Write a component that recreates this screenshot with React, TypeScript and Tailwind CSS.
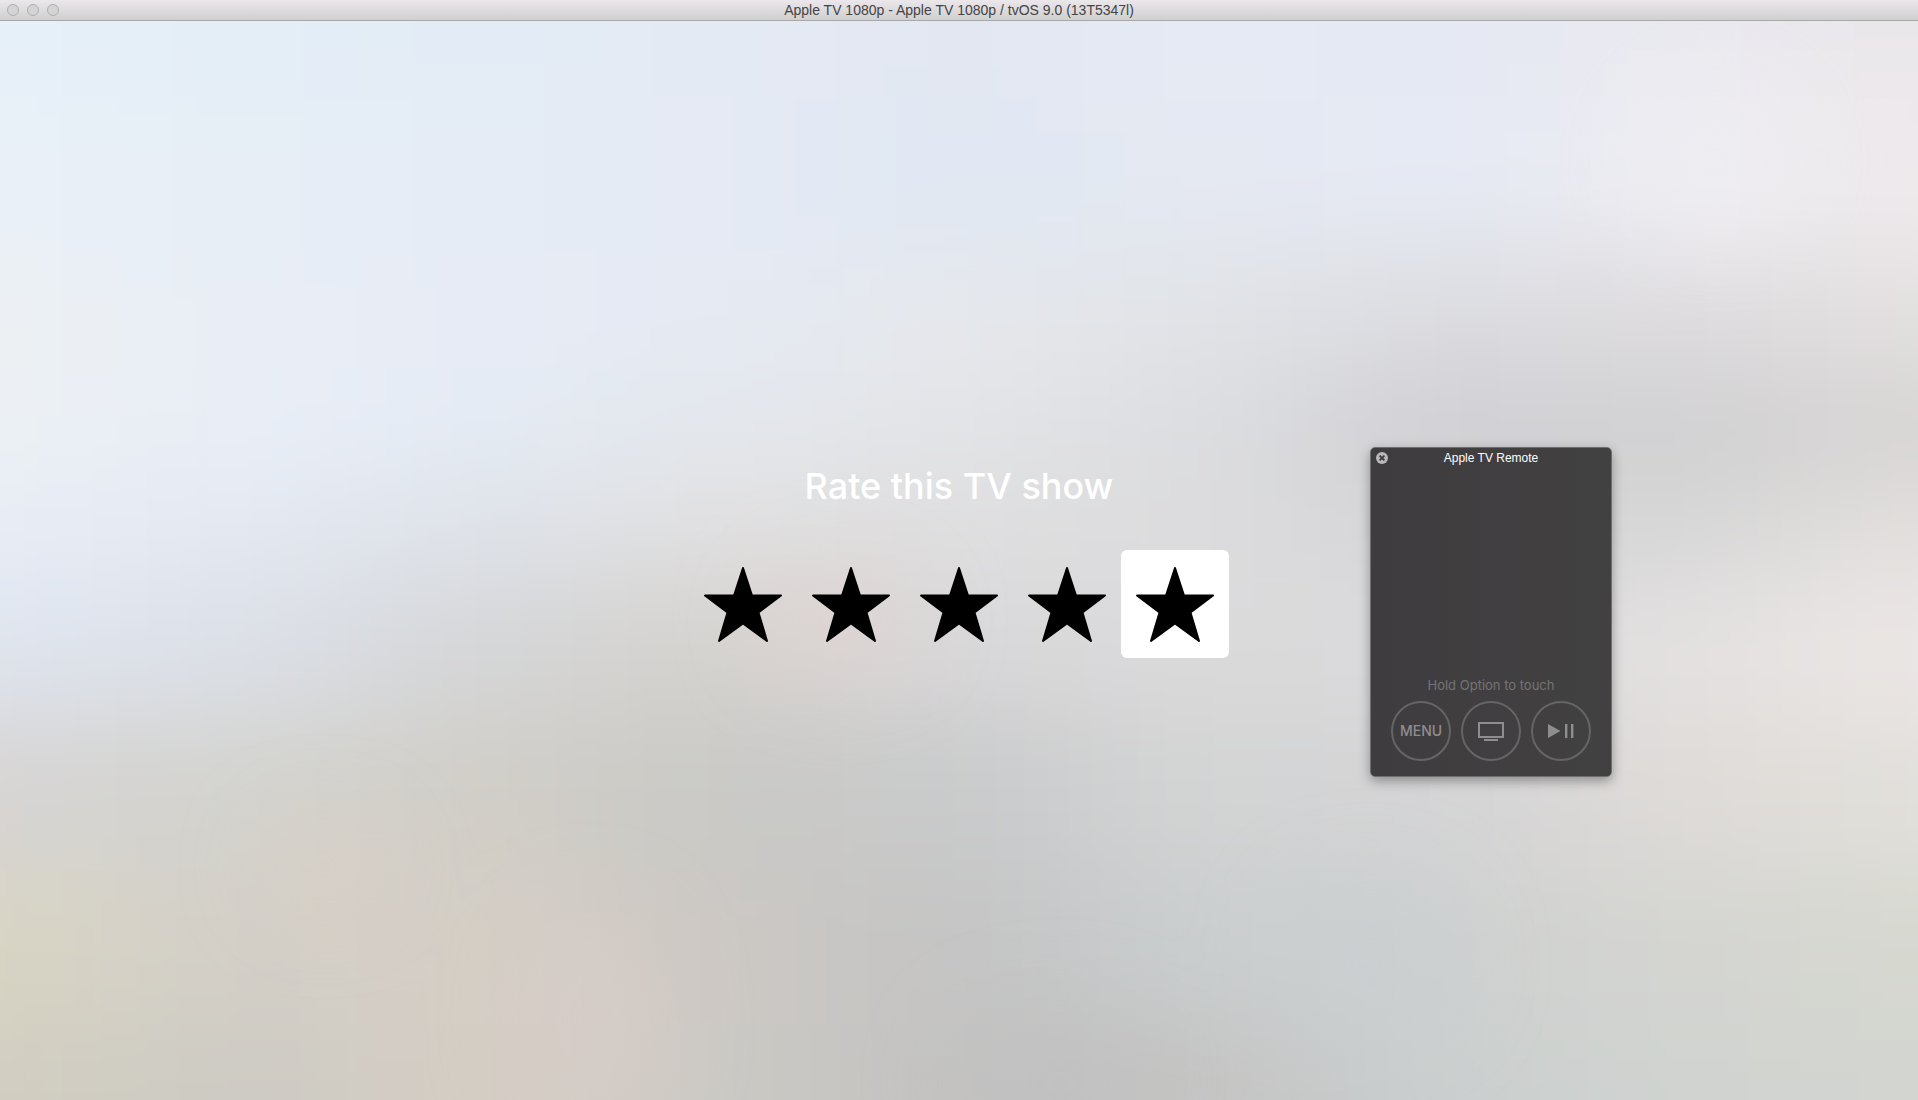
import { useState } from "react";

const columns = [0, 240, 480, 720, 960, 1200, 1440, 1680, 1918];

const wallpaper = [
  { y: 0, colors: ["#e6f0f8", "#e3eef7", "#e3ecf6", "#e4eaf4", "#e3e7f1", "#e6eaf4", "#e5e9f3", "#eae9f0", "#eae7ea"] },
  { y: 154, colors: ["#e9f0f8", "#e7eef6", "#e5ecf6", "#e5eaf4", "#e0e8f3", "#e5e9f2", "#e6eaf4", "#edecf1", "#efeaec"] },
  { y: 308, colors: ["#ecf0f3", "#e9eef6", "#e6ebf5", "#e5eaf3", "#e6e8ec", "#e1e3e7", "#dcdce0", "#dedcdf", "#e4e0e0"] },
  { y: 400, colors: ["#ecf1f4", "#e9eef7", "#e5ecf5", "#e4e8ed", "#e3e4e7", "#dcdde0", "#cfced3", "#cfcfd1", "#d6d3d2"] },
  { y: 500, colors: ["#e8edf6", "#e4e9f2", "#dfe3ea", "#e1e0e1", "#dfdfe0", "#dcdcde", "#d5d5d7", "#d7d7d7", "#e2dfdd"] },
  { y: 616, colors: ["#dfe5ef", "#dce0e8", "#d5d6d8", "#d5d2ce", "#d9d8da", "#dbdadb", "#dbdadc", "#e4e1e1", "#ece7e6"] },
  { y: 770, colors: ["#d7d4d4", "#d3d3ce", "#d1cec7", "#c9c9c6", "#c9cacb", "#d3d4d4", "#d4d4d6", "#dfdbd8", "#e2e0db"] },
  { y: 924, colors: ["#d8d5c4", "#d3cfc8", "#d5cec5", "#ccc8c4", "#c4c4c4", "#cacecf", "#cfd1d0", "#d4d5d1", "#d6d8d0"] },
  { y: 1078, colors: ["#d1cdc1", "#cdcbc4", "#d5cdc4", "#cbc9c4", "#c3c2c1", "#c4c3c2", "#cacfcf", "#d0d3d0", "#d2d5d0"] },
];

const glows = [
  { cx: 1715, cy: 140, rx: 80, ry: 80, fill: "#f0eff3" },
  { cx: 840, cy: 600, rx: 80, ry: 50, fill: "#e2d2d0" },
  { cx: 325, cy: 845, rx: 60, ry: 40, fill: "#ddcfc4" },
  { cx: 590, cy: 1000, rx: 70, ry: 110, fill: "#d9cdc9" },
  { cx: 1060, cy: 1060, rx: 110, ry: 70, fill: "#c0c0c1" },
  { cx: 1370, cy: 940, rx: 90, ry: 80, fill: "#c8ced1" },
];

/** Edges of the cell round node i, running well past the canvas at both ends. */
function span(nodes: number[], i: number) {
  const start = i === 0 ? -300 : (nodes[i - 1] + nodes[i]) / 2;
  const end = i === nodes.length - 1 ? nodes[i] + 300 : (nodes[i] + nodes[i + 1]) / 2;
  return { start, size: end - start + 1 };
}

function Wallpaper() {
  const rows = wallpaper.map((row) => row.y);
  return (
    <svg
      className="absolute inset-0 h-full w-full"
      viewBox="0 0 1918 1078"
      preserveAspectRatio="none"
      aria-hidden="true"
    >
      <defs>
        <filter id="soft" filterUnits="userSpaceOnUse" x="-300" y="-300" width="2518" height="1678" colorInterpolationFilters="sRGB">
          <feGaussianBlur stdDeviation="85 50" />
        </filter>
        <filter id="glow" filterUnits="userSpaceOnUse" x="-300" y="-300" width="2518" height="1678" colorInterpolationFilters="sRGB">
          <feGaussianBlur stdDeviation="45" />
        </filter>
      </defs>
      <g filter="url(#soft)">
        {wallpaper.map((row, r) =>
          row.colors.map((color, c) => {
            const h = span(columns, c);
            const v = span(rows, r);
            return <rect key={`${r}-${c}`} x={h.start} y={v.start} width={h.size} height={v.size} fill={color} />;
          }),
        )}
      </g>
      <g filter="url(#glow)" opacity="0.6">
        {glows.map((g) => (
          <ellipse key={g.cx} {...g} />
        ))}
      </g>
    </svg>
  );
}

function TitleBar() {
  return (
    <header className="relative flex h-[21px] shrink-0 items-center justify-center border-b border-[#a8a7a8] bg-linear-to-b from-[#ebe7eb] to-[#d0d0d0]">
      <div className="absolute left-[7px] flex gap-2">
        {["Close", "Minimize", "Zoom"].map((name) => (
          <button
            key={name}
            aria-label={name}
            className="size-3 rounded-full border border-[#b0afb0] bg-[#d5d4d5]"
          />
        ))}
      </div>
      <h1 className="text-[14px] leading-5 text-[#454345]">
        Apple TV 1080p - Apple TV 1080p / tvOS 9.0 (13T5347l)
      </h1>
    </header>
  );
}

function Star() {
  return (
    <svg viewBox="0 0 108 108" className="size-full" aria-hidden="true">
      <path
        d="M54 18 L63 45.5 H92 L69.5 62.5 L78 91 L54 73.5 L30 91 L38.5 62.5 L16 45.5 H45 Z"
        fill="#000"
        stroke="#000"
        strokeWidth="2"
        strokeLinejoin="round"
      />
    </svg>
  );
}

function Rating() {
  const [focused, setFocused] = useState(5);
  return (
    <section className="relative flex flex-col items-center gap-10">
      <h2 className="font-['Inter',sans-serif] text-[36px] leading-[47px] font-medium text-white">
        Rate this TV show
      </h2>
      <div className="flex">
        {[1, 2, 3, 4, 5].map((n) => (
          <button
            key={n}
            aria-label={`${n} stars`}
            onClick={() => setFocused(n)}
            className={n === focused ? "size-[108px] rounded-md bg-white" : "size-[108px] rounded-md"}
          >
            <Star />
          </button>
        ))}
      </div>
    </section>
  );
}

const roundButton =
  "flex size-[60px] items-center justify-center rounded-full border-2 border-[#666566] text-[#8f8e8f]";

function Remote() {
  return (
    <aside className="absolute top-[447px] left-[1370px] flex h-[330px] w-[242px] flex-col rounded-[5px] border border-[#6f6e70] bg-linear-to-r from-[#3f3c3f] to-[#424141] shadow-[0_4px_12px_rgba(0,0,0,0.35)]">
      <div className="relative flex h-5 items-center justify-center">
        <button aria-label="Close remote" className="absolute left-[5px] size-3">
          <svg viewBox="0 0 12 12" className="size-3">
            <circle cx="6" cy="6" r="6" fill="#b9b8b8" />
            <path d="M3.6 3.6 L8.4 8.4 M8.4 3.6 L3.6 8.4" stroke="#3d3b3d" strokeWidth="1.8" />
          </svg>
        </button>
        <h2 className="text-[12px] leading-5 text-white">Apple TV Remote</h2>
      </div>
      <div className="mt-auto flex flex-col items-center font-['Inter',sans-serif]">
        <p className="mb-1.5 text-[13px] leading-5 text-[#757475]">Hold Option to touch</p>
        <div className="mb-[15px] flex gap-2.5">
          <button className={roundButton}>
            <span className="text-[14px] leading-5 font-medium">MENU</span>
          </button>
          <button className={roundButton} aria-label="Home">
            <svg viewBox="0 0 26 20" className="h-5 w-[26px]" fill="none">
              <rect x="1" y="2" width="24" height="14" stroke="currentColor" strokeWidth="2" />
              <path d="M6 19 H20" stroke="currentColor" strokeWidth="2" />
            </svg>
          </button>
          <button className={roundButton} aria-label="Play or pause">
            <svg viewBox="0 0 26 14" className="h-3.5 w-[26px]" fill="currentColor">
              <path d="M0 0 L12.5 7 L0 14 Z" />
              <rect x="17" y="0" width="2.4" height="14" />
              <rect x="23" y="0" width="2.4" height="14" />
            </svg>
          </button>
        </div>
      </div>
    </aside>
  );
}

export default function App() {
  return (
    <div className="relative flex min-h-screen flex-col overflow-hidden font-['Liberation_Sans',sans-serif]">
      <TitleBar />
      <main className="relative flex flex-1 flex-col items-center justify-center overflow-hidden">
        <Wallpaper />
        <Rating />
      </main>
      <Remote />
    </div>
  );
}
